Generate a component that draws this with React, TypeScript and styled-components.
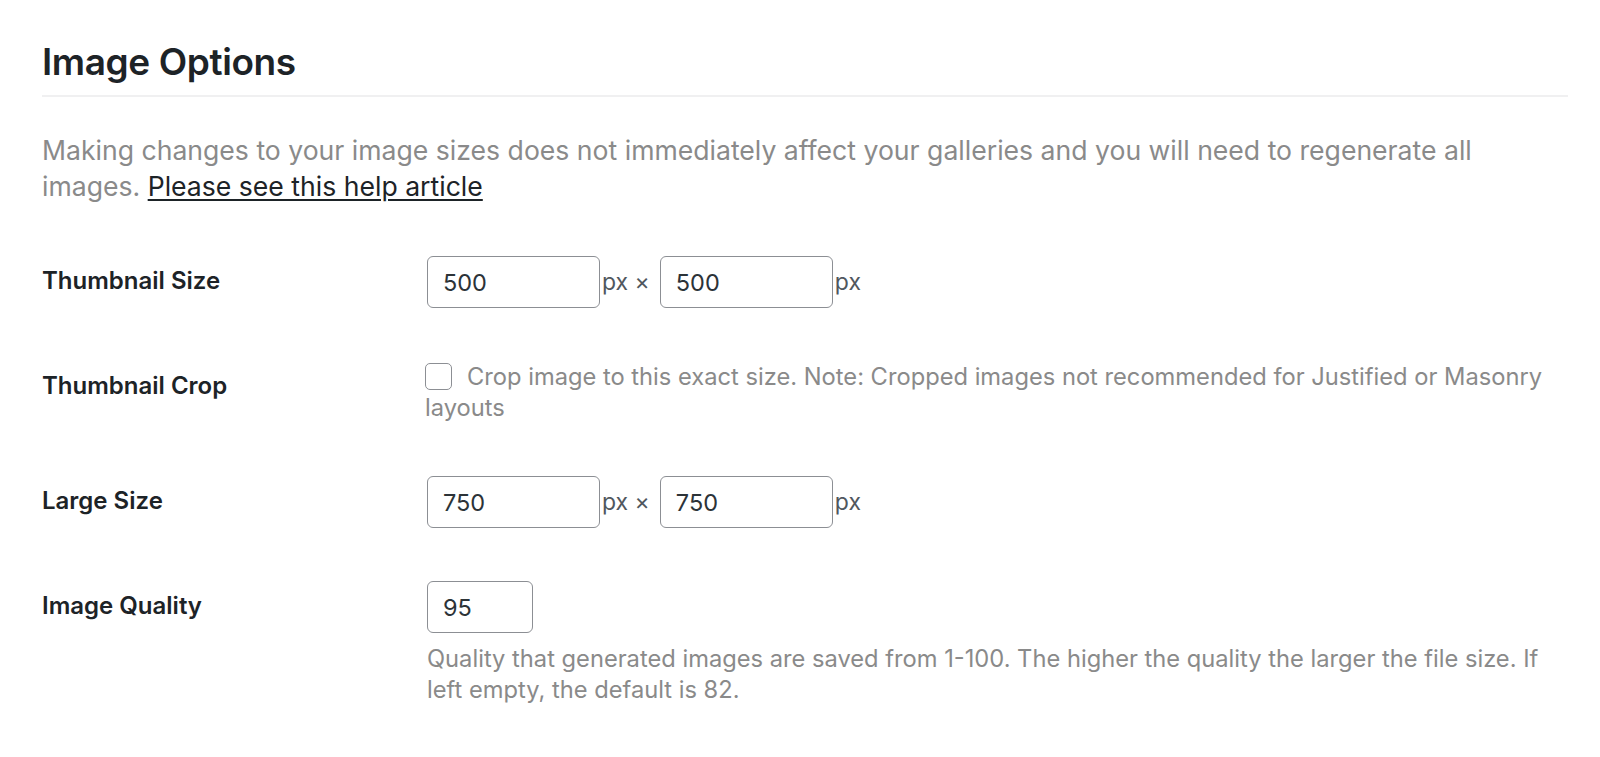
import styled, { createGlobalStyle } from "styled-components";

const GlobalStyle = createGlobalStyle`
  html, body {
    margin: 0;
    padding: 0;
    background: #ffffff;
  }
  body {
    font-family: Inter, "Liberation Sans", Arial, sans-serif;
    color: #1d2327;
  }
`;

const Page = styled.div`
  padding: 38px 32px 40px 42px;
`;

const Title = styled.h2`
  margin: 0;
  padding-bottom: 9px;
  font-size: 37px;
  font-weight: 600;
  line-height: 48px;
  letter-spacing: -0.4px;
  border-bottom: 2px solid #f0f0f1;
`;

const Intro = styled.p`
  margin: 35px 0 52px;
  font-size: 26.6px;
  line-height: 36px;
  color: #8a8a8a;
`;

const HelpLink = styled.a`
  color: #1d2327;
  text-decoration: underline;
  text-underline-offset: 3px;
`;

const Form = styled.div`
  display: flex;
  flex-direction: column;
  gap: 53px;
`;

const Row = styled.div`
  display: grid;
  grid-template-columns: 385px 1fr;
  align-items: start;
`;

const Label = styled.div`
  padding-top: 10px;
  font-size: 24px;
  font-weight: 600;
  line-height: 30px;
`;

const Inline = styled.div`
  display: flex;
  align-items: center;
`;

const NumberInput = styled.input<{ $width: number }>`
  box-sizing: border-box;
  width: ${(p) => p.$width}px;
  height: 52px;
  margin: 0;
  padding: 0 15px;
  border: 1.5px solid #8c8f94;
  border-radius: 6px;
  background: #ffffff;
  font-family: inherit;
  font-size: 23.5px;
  color: #2c3338;
  outline: none;
`;

const Unit = styled.span<{ $after?: number }>`
  padding: 0 ${(p) => p.$after ?? 0}px 0 2px;
  font-size: 23px;
  color: #50575e;
`;

const Note = styled.div`
  margin-left: -2px;
  font-size: 23.7px;
  line-height: 31px;
  color: #8a8a8a;
`;

const Box = styled.span`
  display: inline-block;
  box-sizing: border-box;
  width: 27px;
  height: 27px;
  margin: 2px 15px 0 0;
  border: 1.5px solid #8c8f94;
  border-radius: 5px;
  background: #ffffff;
  vertical-align: top;
`;

const Description = styled.p`
  margin: 10px 0 0;
  font-size: 23.7px;
  line-height: 31px;
  color: #8a8a8a;
`;

export default function App() {
  return (
    <>
      <GlobalStyle />
      <Page>
        <Title>Image Options</Title>
        <Intro>
          Making changes to your image sizes does not immediately affect your galleries and you
          will need to regenerate all images.{" "}
          <HelpLink href="#">Please see this help article</HelpLink>
        </Intro>
        <Form>
          <Row>
            <Label>Thumbnail Size</Label>
            <Inline>
              <NumberInput $width={173} defaultValue="500" />
              <Unit $after={10}>px ×</Unit>
              <NumberInput $width={173} defaultValue="500" />
              <Unit>px</Unit>
            </Inline>
          </Row>
          <Row>
            <Label>Thumbnail Crop</Label>
            <Note>
              <Box />
              Crop image to this exact size. Note: Cropped images not recommended for Justified or
              Masonry layouts
            </Note>
          </Row>
          <Row>
            <Label>Large Size</Label>
            <Inline>
              <NumberInput $width={173} defaultValue="750" />
              <Unit $after={10}>px ×</Unit>
              <NumberInput $width={173} defaultValue="750" />
              <Unit>px</Unit>
            </Inline>
          </Row>
          <Row>
            <Label>Image Quality</Label>
            <div>
              <NumberInput $width={106} defaultValue="95" />
              <Description>
                Quality that generated images are saved from 1-100. The higher the quality the
                larger the file size. If left empty, the default is 82.
              </Description>
            </div>
          </Row>
        </Form>
      </Page>
    </>
  );
}
